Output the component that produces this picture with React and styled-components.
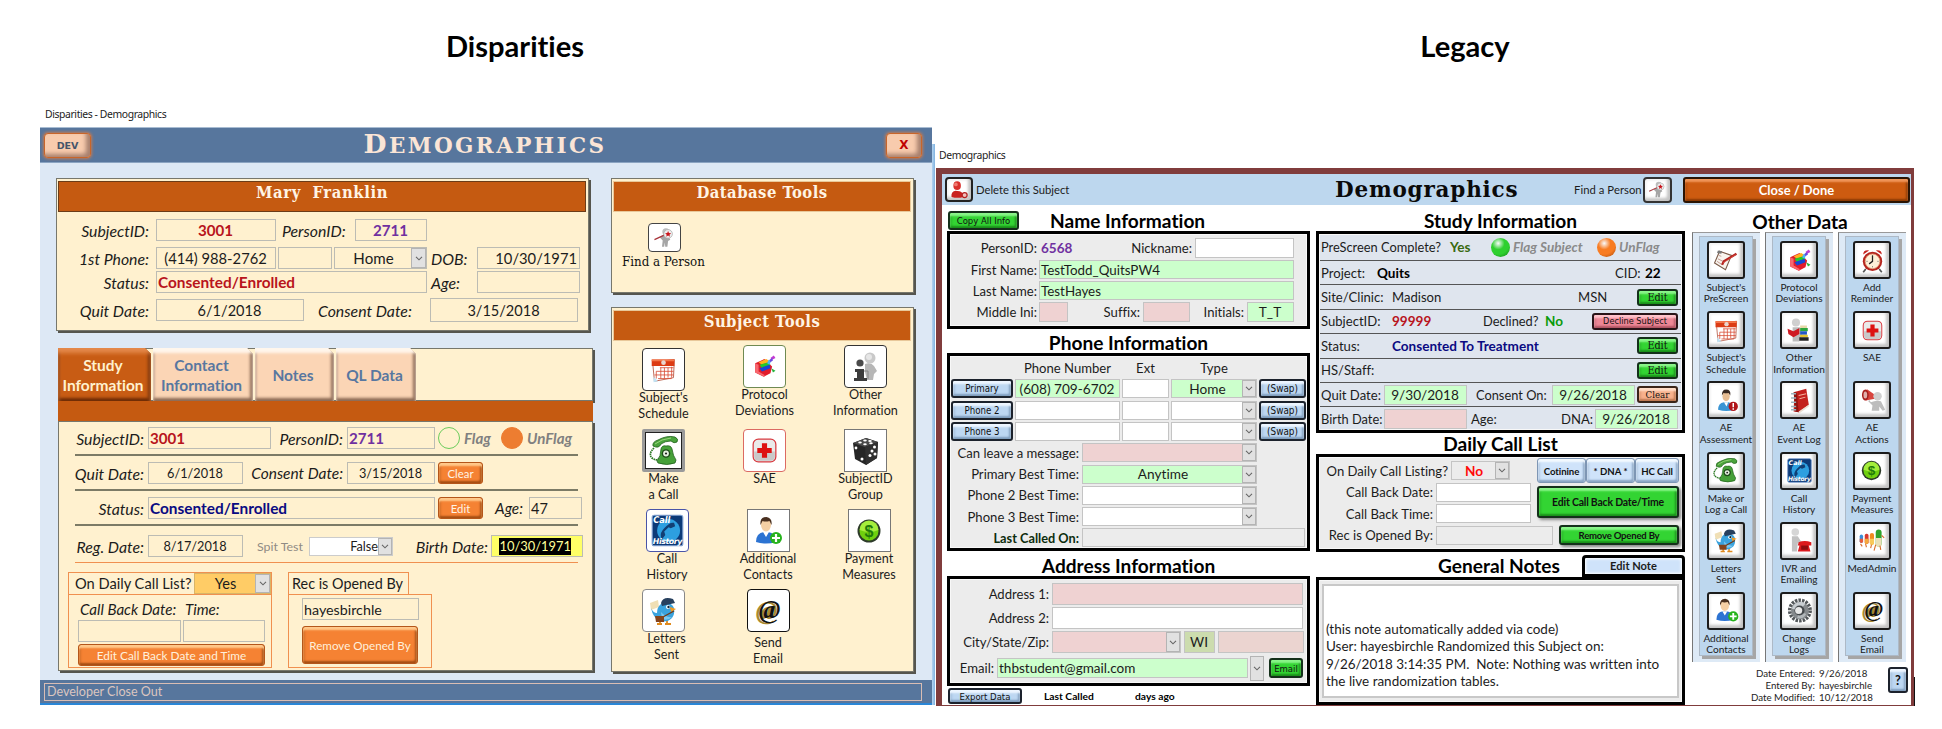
import React from 'react';
import styled, { createGlobalStyle, css } from 'styled-components';

const Global = createGlobalStyle`
  *, *::before, *::after { box-sizing: border-box; }
  body { margin: 0; background: #fff; font-family: Lato, "Open Sans", sans-serif; color: #1c1c1c; font-variant-ligatures: none; }
`;

const FACTOR = 0.91;
const fs = (n) => `${(n * FACTOR).toFixed(2)}px`;

/* ---------- shared pieces ---------- */
const Page = styled.div`
  width: 1942px; height: 729px; display: flex; overflow: hidden; background: #fff;
`;
const Side = styled.section`
  width: ${(p) => p.$w}px; padding-left: ${(p) => p.$pl}px; flex: none;
  display: flex; flex-direction: column; align-items: flex-start;
`;
const Heading = styled.h1`
  margin: 0 0 0 ${(p) => p.$ml}px; width: 200px; height: 94px; line-height: 92px; text-align: center;
  font-size: ${fs(32)}; font-weight: 700; color: #000;
`;
const WindowTitle = styled.div`
  height: 20px; margin: ${(p) => p.$mt}px 0 0 ${(p) => p.$ml}px; font: 400 10.4px/20px "Noto Sans", sans-serif;
  letter-spacing: ${(p) => p.$ls || '-0.3px'}; color: #222; white-space: nowrap;
`;
const Row = styled.div`
  display: flex; align-items: center; flex: none;
  height: ${(p) => p.$h || 22}px; margin-top: ${(p) => p.$mt || 0}px; margin-left: ${(p) => p.$ml || 0}px;
`;
const Label = styled.span`
  flex: none; white-space: nowrap; width: ${(p) => (p.$w ? `${p.$w}px` : 'auto')};
  margin-left: ${(p) => p.$ml || 0}px; text-align: ${(p) => p.$align || 'left'};
  font-size: ${(p) => fs(p.$size || (p.$b ? 14.9 : 14.4))}; font-style: ${(p) => (p.$i ? 'italic' : 'normal')};
  font-weight: ${(p) => (p.$b ? 700 : 400)}; color: ${(p) => p.$c || '#1c1c1c'};
  letter-spacing: ${(p) => p.$ls || 0}px;
  ${(p) => p.$align === 'right' && 'display: flex; justify-content: flex-end;'}
`;
const ItalicLabel = styled(Label)`
  font-size: ${(p) => fs(p.$size || 17.4)}; font-style: italic;
`;
const Field = styled.div`
  flex: none; display: flex; align-items: center; overflow: hidden; white-space: nowrap;
  width: ${(p) => p.$w}px; height: ${(p) => p.$h || 22}px; margin-left: ${(p) => p.$ml || 0}px;
  justify-content: ${(p) => ({ center: 'center', right: 'flex-end' }[p.$align] || 'flex-start')};
  padding: 0 ${(p) => (p.$arrow ? 0 : 2)}px 0 1px;
  background: ${(p) => p.$bg || 'transparent'}; border: 1px solid ${(p) => p.$line || '#bcbcb4'};
  font-size: ${(p) => fs(p.$size || 15)}; font-weight: ${(p) => (p.$b ? 700 : 400)}; color: ${(p) => p.$c || '#1c1c1c'};
`;
const FieldText = styled.span`flex: 1; text-align: ${(p) => p.$align || 'center'};`;
const Arrow = styled.span`
  flex: none; width: ${(p) => p.$w || 14}px; height: 100%; background: #e1e1e1; border: 1px solid #b4b4b4;
  display: flex; align-items: center; justify-content: center;
`;
const Chevron = ({ w }) => (
  <Arrow $w={w}>
    <svg width="8" height="5" viewBox="0 0 8 5"><path d="M1 .8 4 3.8 7 .8" fill="none" stroke="#666" strokeWidth="1.1" /></svg>
  </Arrow>
);
const Select = ({ value, arrow, align, ...rest }) => (
  <Field {...rest} $arrow><FieldText $align={align}>{value}</FieldText><Chevron w={arrow} /></Field>
);

const tones = {
  orange: { bg: '#f58233', hi: '#ffc98b', lo: '#a64f14', line: '#b4561a' },
  rust: { bg: '#cd5b10', hi: '#f0965a', lo: '#8a3a06', line: '#2a1404' },
  green: { bg: '#33d433', hi: '#8af58a', lo: '#1a8f1a', line: '#14301a' },
  pink: { bg: '#ee8796', hi: '#ffc3cb', lo: '#b25464', line: '#2a1418' },
  salmon: { bg: '#f7b08c', hi: '#ffdcc6', lo: '#bd7650', line: '#3a2418' },
  blue: { bg: '#bdd7f2', hi: '#eef6ff', lo: '#7f9dbd', line: '#1c222c' },
  sky: { bg: '#cfe3fa', hi: '#f4faff', lo: '#8aa5c4', line: '#7e96b4' },
};
const Button = styled.button`
  flex: none; padding: 0; white-space: nowrap; display: flex; align-items: center; justify-content: center;
  width: ${(p) => p.$w}px; height: ${(p) => p.$h}px; margin-left: ${(p) => p.$ml || 0}px; margin-top: ${(p) => p.$mt || 0}px;
  font-family: ${(p) => p.$font || 'inherit'}; font-size: ${(p) => fs(p.$size || 12)}; font-weight: ${(p) => (p.$b ? 700 : 400)};
  letter-spacing: ${(p) => p.$ls || 0}px;
  color: ${(p) => p.$c || '#111'}; border-radius: 3px;
  ${(p) => {
    const t = tones[p.$tone];
    return css`
      background: ${t.bg}; border: ${p.$thin ? 1 : 2}px solid ${t.line};
      box-shadow: inset 0 3px 2px ${t.hi}, inset -2px -2px 2px ${t.lo}, inset 2px 0 2px ${t.lo}66${p.$drop ? ', 2px 2px 3px #8a8a8a' : ''};
    `;
  }}
`;

/* ---------- pictures ---------- */
const pics = {
  calendar: <><path d="M4 8 28 5 27 25 6 29z" fill="#fff" stroke="#b9604c" /><path d="M3 5h25v7H3z" fill="#dc3b14" /><path d="M3 5h25v2H3z" fill="#f4774b" /><circle cx="16" cy="8.5" r="2.6" fill="#e8d6cf" /><path d="M12 14h15M8 18h19M6 22h21M10 26h15M8 18v8M13 14v12M17 14v12M21 14v11M25 13v12" stroke="#d84a32" fill="none" strokeWidth=".9" /><path d="m5 24 5 5-5 1z" fill="#bfe2f4" /></>,
  books: <><path d="m5 12 11-5 9 9-2 8-8 4-10-5z" fill="#e21c2b" /><path d="m9 11 9-4 5 3-10 4z" fill="#ffb21e" /><path d="m10 14 11-3 2 3-10 4z" fill="#25c92c" /><path d="m10 18 12-4 1 4-10 4z" fill="#1747d6" /><path d="m5 12 4 2v8l7 4v2L5 23z" fill="#f7686e" /><path d="m19 12 3 2 2-5-3-1z" fill="#4bb6f4" /><path d="m23 6 4-3 2 3-4 2z" fill="#c23bd2" /><path d="m22 8 3-2 1 3-3 2z" fill="#6a4be0" /><path d="m24 18 5 3-3 2z" fill="#25b33a" /></>,
  info: <><circle cx="20" cy="7" r="5.5" fill="#c9c9c9" /><circle cx="19" cy="6" r="3" fill="#e6e6e6" /><path d="M15 13q6-2 9 2l3 5-3 3-1 6h-6l-2-8z" fill="#b7b7b7" /><circle cx="10" cy="12" r="3.6" fill="#4a4a4a" /><path d="M5 18h9v9h3v3H4v-3h3v-6H5z" fill="#3d3d3d" /><path d="M14 20h4v8" stroke="#888" fill="none" /></>,
  phone: <><path d="M6 13q-6 6-2 10 4 3 7 1" fill="none" stroke="#2c7a24" strokeWidth="1.7" strokeDasharray="1.5 .7" /><path d="M5 11q-1-4 5-6 9-5 17-3 4 2 2 5-3 2-6-1-6 0-10 3-2 5-8 2z" fill="#4aa33c" stroke="#1f5f1a" strokeWidth=".8" /><path d="M7 9q6-5 16-6" stroke="#9ad67c" fill="none" /><path d="M13 14q1-4 5-3 5-1 6 3 1 7 4 11l-1 3q-8 3-17 0l-1-2q4-5 4-12z" fill="#45a038" stroke="#1f5f1a" strokeWidth=".8" /><circle cx="18" cy="18.500" r="4.300" fill="#1d4b18" /><circle cx="18" cy="18.500" r="2.900" fill="#e6f0e0" /><circle cx="18" cy="18.500" r="1.100" fill="#222" /></>,
  cross: <><rect x="5" y="5" width="22" height="22" rx="5" fill="#eaeaea" stroke="#d7393f" strokeWidth="1.2" /><path d="M6 17h20v5q0 4-4 4H10q-4 0-4-4z" fill="#c9c9c9" /><path d="M13.500 9h5v4.500H23v5h-4.500V23h-5v-4.500H9v-5h4.500z" fill="#dd1111" /></>,
  dice: <><path d="m16 3 12 4-1 16-11 7L5 24 3 8z" fill="#262626" /><path d="m16 3 12 4-13 5L3 8z" fill="#4a4a4a" /><path d="m15 12 13-5-1 16-11 7z" fill="#303030" /><g fill="#fff"><ellipse cx="10" cy="7.500" rx="1.800" ry="1" /><ellipse cx="15" cy="5.500" rx="1.800" ry="1" /><ellipse cx="20" cy="6" rx="1.800" ry="1" /><ellipse cx="15" cy="9.300" rx="1.800" ry="1" /><ellipse cx="21" cy="8.300" rx="1.800" ry="1" /><circle cx="6" cy="13" r="1.400" /><circle cx="12" cy="24" r="1.500" /><circle cx="24.500" cy="12" r="1.500" /><circle cx="22" cy="16" r="1.500" /><circle cx="20" cy="20.500" r="1.500" /><circle cx="25" cy="19" r="1.500" /></g></>,
  history: <><rect x="2" y="2" width="28" height="28" rx="2" fill="#0c3a78" stroke="#7f9fd0" /><circle cx="17" cy="16" r="10.500" fill="#2d9fe0" /><path d="M10 22q-1-4 3-8 5-6 9-5l1 3-4 2-2-1-4 4 1 3-3 4z" fill="#123f74" /><text x="3" y="9" fontSize="7.500" fontWeight="700" fontStyle="italic" fontFamily="DejaVu Sans" fill="#fff">Call</text><text x="2.500" y="28" fontSize="7.200" fontWeight="700" fontStyle="italic" fontFamily="DejaVu Sans" fill="#fff" textLength="27">History</text></>,
  contact: <><path d="M4 27q0-9 8-10h4q8 1 8 10-10 3-20 0z" fill="#2c73d2" /><path d="m11 17 3 5 3-5z" fill="#fff" /><ellipse cx="14" cy="10" rx="5" ry="6.500" fill="#f5cfa4" /><path d="M8.500 10q-1-8 6-8 6 1 5 8l-2-4q-4 1-7 0z" fill="#4a3020" /><circle cx="24" cy="23" r="6" fill="#27b31d" /><path d="M24 19v8M20 23h8" stroke="#fff" strokeWidth="2.200" /></>,
  alert: <><path d="M6 27q0-8 7-9h5q7 1 7 9-9 3-19 0z" fill="#3a95d4" /><path d="m13 18 3 5 2-5z" fill="#fff" /><ellipse cx="15.500" cy="11" rx="4.300" ry="5.800" fill="#e8bd92" /><path d="M10.500 10q0-7 5-7 6 0 5 7l-2-3q-3 1-6 0z" fill="#3a2a22" /><circle cx="24" cy="23" r="5.500" fill="#b0151a" /><path d="M24 19v5M24 25.300v1.700" stroke="#fff" strokeWidth="1.800" /></>,
  dollar: <><circle cx="16" cy="16" r="11.500" fill="#2d3b2a" /><circle cx="16" cy="16" r="9.500" fill="#6fd00e" /><path d="M6.500 15a9.500 9.500 0 0 1 19 0q-9 4-19 0" fill="#a4ee3c" /><text x="16" y="21.500" textAnchor="middle" fontSize="16" fontWeight="700" fontFamily="Liberation Sans" fill="#1f7a0a">$</text></>,
  bird: <><path d="M9 29h5M17 29h6M12 25v4M19 25v4" stroke="#e08a1e" strokeWidth="1.800" /><path d="m2 8 8-3 1 7-8 3z" fill="#f0dfb5" /><path d="M3 13q2 5 6 5 0-6 4-9 10-3 13 4 1 6-2 10-5 5-12 3-7-3-9-13z" fill="#3aa3de" /><path d="M13 17q5 6 11 5-4 4-10 2z" fill="#7cc9f0" /><path d="M13 8q2-7 12-4l2 4-13 3z" fill="#27405e" /><path d="m22 12 6 2-5 3z" fill="#f29a1f" /><circle cx="20" cy="12" r="2" fill="#fff" /><circle cx="20.500" cy="12" r="1.200" fill="#123" /><path d="m26 16-13 7" stroke="#6d3a1a" strokeWidth="1.400" /><path d="M7 21h9v6H8z" fill="#84441d" /></>,
  at: <><text x="14.500" y="24" textAnchor="middle" fontSize="26" fontWeight="700" fontStyle="italic" fontFamily="Liberation Serif" fill="#a88a30">@</text><text x="17.500" y="23" textAnchor="middle" fontSize="26" fontWeight="700" fontStyle="italic" fontFamily="Liberation Serif" fill="#111">@</text></>,
  find: <><circle cx="18" cy="8" r="5" fill="#bdbdbd" /><path d="M14 13h7l3 6-3 2-1 8h-3l-.5-6-1 6h-3l1-9-4-4z" fill="#a5a5a5" /><path d="M2 19 17 12" stroke="#a8343a" strokeWidth="1.800" /><circle cx="21" cy="11" r="6" fill="#eeeeee" stroke="#aaa" /><path d="m21 7 1.200 2.800 3 .2-2.300 2 .8 3-2.700-1.700-2.700 1.700.8-3-2.300-2 3-.2z" fill="#c9141c" /></>,
  remove: <><ellipse cx="13" cy="9" rx="6" ry="7" fill="#d8302c" /><path d="M4 27q-1-9 6-10l7 1q6 2 6 9-9 3-19 0z" fill="#c9211f" /><ellipse cx="11" cy="7" rx="3" ry="3" fill="#f07a70" /><circle cx="25" cy="24" r="4" fill="#f0c0bc" stroke="#b52222" strokeWidth="2" /></>,
  clip: <><path d="m9 5 14 5-7 17-13-8z" fill="#f8f4ee" stroke="#7a5a48" strokeWidth="1.300" /><path d="m8 10 3 1m-4 3 8 4m-9-1 6 4" stroke="#b98a80" /><path d="m7 4 5 1-1 3-5-1z" fill="#777" /><path d="m12 21 2-4 15-9" fill="none" stroke="#b3221f" strokeWidth="2.600" /><path d="M13 19 28 9" stroke="#e05a4a" strokeWidth=".8" /></>,
  clock: <><path d="M5 9q0-6 7-5zM27 9q0-6-7-5z" fill="#c4221c" /><circle cx="16" cy="17" r="11.500" fill="#b5241d" /><circle cx="16" cy="17" r="8.700" fill="#fdf0d8" stroke="#e2a07a" /><path d="M16 10v7l-4 3" fill="none" stroke="#222" strokeWidth="1.500" /><path d="m8 26-3 4m19-4 3 4" stroke="#555" strokeWidth="2" /><path d="M16 10v1M16 23v1M9 17h1M22 17h1" stroke="#333" /></>,
  reader: <><circle cx="13" cy="6.500" r="4.800" fill="#d0d0d0" /><path d="M9 12h9l2 8-3 9H9z" fill="#bcbcbc" /><path d="m3 14 7 3 7-4v7l-7 4-6-4z" fill="#cf1a22" /><path d="M18 10h8v3h-8z" fill="#e6d8a8" /><path d="M18 13h9v4h-9z" fill="#2aa53c" /><path d="M18 17h8v4h-8z" fill="#2256c8" /><path d="M18 21h9v3h-9z" fill="#e4c32c" /><path d="M17 24h11v4H17z" fill="#222" /></>,
  book: <><path d="m10 6 14-4 3 19-12 9-6-1z" fill="#c3201c" /><path d="m9 6 2 23 4 1-2-23z" fill="#8f1410" /><path d="m15 29 12-8v2l-11 8z" fill="#eadfd2" /><path d="M6 8h6M6 13h6M6 18h6M6 23h6M6 27h6" stroke="#9bb3bd" strokeWidth="1.800" /><path d="m15 10 9-2m-8 6 7-2" stroke="#f3b09c" strokeWidth="1.200" /></>,
  horn: <><path d="m5 4 5-1 10 7-1 4-11 2z" fill="#d8443e" /><ellipse cx="7.500" cy="9.500" rx="4" ry="6.500" fill="#a6211f" /><ellipse cx="7.500" cy="9.500" rx="2.200" ry="4.200" fill="#dfb0ac" /><circle cx="22" cy="11" r="5" fill="#cfcfcf" /><path d="M14 18q7-3 12-1l5 10-3 1-4-5v5h-9l1-6-5-5 1-2z" fill="#bdbdbd" /></>,
  ivr: <><circle cx="11" cy="6" r="4.500" fill="#d6d6d6" /><path d="M7 11h7l5 8-1 2-4-2-1 10H7z" fill="#c2c2c2" /><path d="M15 18q7-3 15 0v4h-3l2 7H14l2-7h-2z" fill="#dc1a1e" /><rect x="18" y="22" width="8" height="5" fill="#8d0d10" /></>,
  pills: <><rect x="2" y="9" width="4" height="10" rx="2" fill="#3b8fd8" /><path d="M2 14h4v3a2 2 0 0 1-4 0z" fill="#e85a3a" /><rect x="8" y="8" width="4.500" height="12" rx="2" fill="#d8382e" /><path d="M8 14h4.500v4a2 2 0 0 1-4.500 0z" fill="#f4a83a" /><rect x="14" y="7" width="5" height="14" rx="2.500" fill="#ee8a1e" /><path d="M14 14h5v5a2.500 2.500 0 0 1-5 0z" fill="#f8c95a" /><rect x="21" y="3" width="7" height="20" rx="3.500" fill="#2fa32c" /><path d="M21 13h7v7a3.500 3.500 0 0 1-7 0z" fill="#e8e0b8" /><path d="m3 20 2 3m4-3 1 4m6-3-1 4m6-4-2 7m7-6 1 5m1-17 3 3" stroke="#d86a28" strokeWidth="1.300" /></>,
  gear: <><circle cx="16.500" cy="16" r="12" fill="none" stroke="#54585b" strokeWidth="4.500" strokeDasharray="2.900 1.290" /><circle cx="16.500" cy="16" r="10.500" fill="#85898c" /><path d="M7 14a10 10 0 0 1 16-6l-7 8z" fill="#c9ced2" /><path d="M24 20a10 10 0 0 1-11 5l3-8z" fill="#b2b7ba" /><circle cx="16" cy="16" r="6" fill="#45494c" /><circle cx="15" cy="16" r="4.200" fill="#e8e8e8" /></>,
};
const Pic = ({ name, size }) => <svg width={size} height={size} viewBox="0 0 32 32">{pics[name]}</svg>;

const IconButton = styled.span`
  flex: none; display: flex; align-items: center; justify-content: center; background: #fff; overflow: hidden;
  width: ${(p) => p.$w}px; height: ${(p) => p.$h || p.$w}px; margin-left: ${(p) => p.$ml || 0}px;
  border: ${(p) => p.$bw || 1}px solid ${(p) => p.$line || '#444'}; border-radius: ${(p) => (p.$r === undefined ? 4 : p.$r)}px;
  box-shadow: ${(p) => (p.$bevel ? 'inset -3px -3px 3px #c4c4c4, inset 2px 2px 2px #f4f4f4' : p.$inner ? 'inset 0 0 0 1px #222' : 'none')};
`;

/* ---------- "Disparities" window ---------- */
const BlueWindow = styled.div`
  width: 896px; height: 578px; display: flex; flex-direction: column; padding-right: 4px;
  background: linear-gradient(90deg, #b4d4f0, #7fb2e0) right 1px bottom / 3px 561px no-repeat;
`;
const BlueHeader = styled.header`
  height: 36px; flex: none; display: flex; align-items: center; background: #57769d; padding: 0 10px 0 4px;
  border-top: 1px solid #a8bcd2; border-bottom: 1px solid #8ba4c2;
`;
const PeachButton = styled.button`
  width: ${(p) => p.$w}px; height: 25px; padding: 0; background: #f8cbad; border: 1px solid #c8652a; border-radius: 4px;
  box-shadow: inset -4px -3px 4px #a8806e, 0 0 3px 1px #c27a54; color: ${(p) => p.$c};
  font: 700 ${(p) => p.$fs}px "DejaVu Sans", sans-serif;
`;
const Copper = styled.h2`
  margin: 0 auto; padding-right: 7px; font: 700 21.500px/34px "DejaVu Serif", serif; letter-spacing: 2.4px; color: #fbe5d6;
  &::first-letter { font-size: 26.500px; }
`;
const BlueBody = styled.div`
  flex: 1; background: #dde8f5; display: flex; align-items: flex-start; padding: 15px 17px 0 16px;
`;
const Stack = styled.div`
  width: ${(p) => p.$w}px; margin-left: ${(p) => p.$ml || 0}px; flex: none; display: flex; flex-direction: column;
`;
const CreamPanel = styled.div`
  width: ${(p) => p.$w}px; height: ${(p) => p.$h}px; margin: ${(p) => p.$mt || 0}px 0 0 ${(p) => p.$ml || 0}px; padding: ${(p) => (p.$pad === undefined ? 2 : p.$pad)}px 2px 0 1px; flex: none;
  background: #fff1cf; border: 1px solid #77776c; box-shadow: 2px 2px 0 #55554e;
  display: flex; flex-direction: column;
`;
const RustBar = styled.div`
  height: 31px; flex: none; background: #c55a11; border: 1px solid ${(p) => p.$line || '#e8c89a'};
  text-align: center; white-space: pre; color: #fff4e4; font: 700 16.500px/21px "DejaVu Serif Condensed", "DejaVu Serif", serif;
  letter-spacing: ${(p) => p.$ls || 0.45}px;
`;
const PlainBar = styled.div`height: 20px; width: 535px; margin-left: 2px; background: #c55a11; flex: none;`;
const TabStrip = styled.div`
  display: flex; width: 535px; height: 53px; margin: 17px 0 0 2px; background: #fff1cf; border: 1px solid #77776c; border-left: 0;
  box-shadow: 2px 2px 0 #55554e; gap: 2px;
`;
const Tab = styled.div`
  width: ${(p) => p.$w}px; height: 53px; margin-top: -1px; display: flex; align-items: center; justify-content: center; text-align: center; flex: none;
  font-size: ${fs(17)}; line-height: 20px; font-weight: 700; padding: 1px 3px 0 0;
  color: ${(p) => (p.$on ? '#fff1cf' : '#5877a0')};
  background: ${(p) => (p.$on ? '#c85c14' : '#fbd5b5')};
  clip-path: polygon(0 0, calc(100% - 6px) 0, 100% 6px, 100% 100%, 0 100%);
  box-shadow: ${(p) => (p.$on
    ? 'inset 0 5px 4px #e58a4c, inset -3px -3px 3px #6e2c06, inset 2px 0 2px #8a3c0c'
    : 'inset 0 5px 3px #fff6ec, inset -3px -3px 3px #8c6a54, inset 2px 0 2px #c9a58c')};
`;
const Divider = styled.div`
  height: ${(p) => p.$h || 2}px; width: 503px; margin: ${(p) => p.$mt}px 0 0 15px; background: ${(p) => p.$c || '#7c7b66'}; flex: none;
`;
const Dot = styled.span`
  flex: none; width: ${(p) => p.$s}px; height: ${(p) => p.$s}px; margin-left: ${(p) => p.$ml || 0}px; border-radius: 50%;
  ${(p) => (p.$ball
    ? css`background: radial-gradient(circle at 38% 28%, #ffffffd0 0, ${p.$c} 35%, ${p.$c} 60%, ${p.$d} 100%);`
    : css`background: ${p.$c}; border: 1px solid ${p.$d};`)}
`;
const OutlineBox = styled.div`
  border: 1px solid #f09050; width: ${(p) => p.$w}px; height: ${(p) => p.$h}px; flex: none;
  display: flex; flex-direction: ${(p) => (p.$row ? 'row' : 'column')}; margin-top: ${(p) => p.$mt || 0}px;
  ${(p) => p.$row && 'align-items: center;'}
`;
const Selected = styled.span`background: #000; color: #ffff9c; line-height: 17px; margin-right: 9px;`;
const ToolGrid = styled.div`
  display: grid; grid-template-columns: repeat(3, 101px); grid-template-rows: 84px 80px 80px 80px; margin-top: 4px;
`;
const Tool = styled.div`
  width: 101px; display: flex; flex-direction: column; align-items: center; text-align: center; white-space: pre;
  padding-left: ${(p) => p.$dx || 0}px; padding-top: ${(p) => p.$dy || 0}px; font-size: ${fs(13.9)}; line-height: 15.700px;
`;
const ToolText = styled.span`
  margin: ${(p) => (p.$gap || 0) - 1}px ${(p) => p.$pull || 0}px 0 0;
`;
const FindText = styled.span`
  margin-left: 9px; height: 20px; font: 400 13.200px/20px "DejaVu Serif Condensed", "DejaVu Serif", serif; color: #111; white-space: nowrap;
`;
const BlueFooter = styled.footer`
  height: 25px; flex: none; background: #57769d; border-bottom: 2px solid #2a86d6; padding: 3px 10px 3px 4px;
`;
const FooterBox = styled.div`
  height: 18px; border: 1px solid #d9bdb4; color: #dcc6c0; padding-left: 2px; font-size: ${fs(13.8)}; line-height: 16px;
`;

const tools = [
  { pic: 'calendar', text: "Subject's\nSchedule", dy: 3, line: '#333' },
  { pic: 'books', text: 'Protocol\nDeviations', line: '#6f8a52' },
  { pic: 'info', text: 'Other\nInformation', line: '#333' },
  { pic: 'phone', text: 'Make\na Call', line: '#9a9a9a', bw: 3, inner: true, r: 2 },
  { pic: 'cross', text: 'SAE', line: '#dc6a62' },
  { pic: 'dice', text: 'SubjectID\nGroup', line: '#777', r: 0 },
  { pic: 'history', text: 'Call\nHistory', line: '#4a55a8', dx: 7 },
  { pic: 'contact', text: 'Additional\nContacts', line: '#777', r: 0, dx: 7 },
  { pic: 'dollar', text: 'Payment\nMeasures', line: '#777', r: 0, dx: 7 },
  { pic: 'bird', text: 'Letters\nSent', line: '#888', pull: -6 },
  { pic: 'at', text: 'Send\nEmail', line: '#111', dx: 7, gap: 4 },
];
const toolPicSize = { history: 35, calendar: 29, books: 27, cross: 33 };

const Disparities = () => (
  <Side $w={936} $pl={40}>
    <Heading $ml={375}>Disparities</Heading>
    <WindowTitle $mt={10} $ml={5} $ls="-0.4px">Disparities - Demographics</WindowTitle>
    <Row $h={3} />
    <BlueWindow>
      <BlueHeader>
        <PeachButton $w={47} $c="#44546a" $fs={9.500}>DEV</PeachButton>
        <Copper>DEMOGRAPHICS</Copper>
        <PeachButton $w={36} $c="#c00000" $fs={12}>X</PeachButton>
      </BlueHeader>
      <BlueBody>
        <Stack $w={537}>
          <CreamPanel $w={533} $h={153}>
            <RustBar $line="#6b3c18" $ls={0.6}>Mary  Franklin</RustBar>
            <Row $mt={7}>
              <ItalicLabel $w={91} $align="right">SubjectID:</ItalicLabel>
              <Field $ml={7} $w={120} $align="center" $b $c="#b8141c" $size={16.6}>3001</Field>
              <ItalicLabel $ml={6} $w={73}>PersonID:</ItalicLabel>
              <Field $w={72} $align="center" $b $c="#7030a0" $size={16.6}>2711</Field>
            </Row>
            <Row $mt={6}>
              <ItalicLabel $w={91} $align="right">1st Phone:</ItalicLabel>
              <Field $ml={7} $w={120} $align="center" $size={16.2}>(414) 988-2762</Field>
              <Field $ml={2} $w={54} />
              <Select $ml={2} $w={93} value="Home" arrow={15} $size={16.6} />
              <ItalicLabel $ml={4} $w={46}>DOB:</ItalicLabel>
              <Field $w={103} $align="right" $size={16.2}>10/30/1971</Field>
            </Row>
            <Row $mt={2}>
              <ItalicLabel $w={91} $align="right">Status:</ItalicLabel>
              <Field $ml={7} $w={271} $b $c="#b8141c" $size={16.9}>Consented/Enrolled</Field>
              <ItalicLabel $ml={4} $w={46}>Age:</ItalicLabel>
              <Field $w={103} />
            </Row>
            <Row $mt={6}>
              <ItalicLabel $w={91} $align="right">Quit Date:</ItalicLabel>
              <Field $ml={7} $w={148} $align="center" $size={16}>6/1/2018</Field>
              <ItalicLabel $ml={14} $w={112}>Consent Date:</ItalicLabel>
              <Field $w={148} $h={24} $align="center" $size={16}>3/15/2018</Field>
            </Row>
          </CreamPanel>
          <TabStrip>
            <Tab $w={93} $on>Study<br />Information</Tab>
            <Tab $w={100}>Contact<br />Information</Tab>
            <Tab $w={79}>Notes</Tab>
            <Tab $w={80}>QL Data</Tab>
          </TabStrip>
          <PlainBar />
          <CreamPanel $w={535} $h={250} $ml={2} $pad={5}>
            <Row>
              <ItalicLabel $w={84} $align="right">SubjectID:</ItalicLabel>
              <Field $ml={4} $w={123} $b $c="#b8141c" $size={16.6}>3001</Field>
              <ItalicLabel $w={72} $align="right">PersonID:</ItalicLabel>
              <Field $ml={4} $w={88} $b $c="#7030a0" $size={16.6}>2711</Field>
              <Dot $ml={3} $s={22} $c="transparent" $d="#6ccc5c" />
              <ItalicLabel $ml={4} $w={37} $b $c="#808080" $size={16.6}>Flag</ItalicLabel>
              <Dot $s={22} $c="#ed7d31" $d="#ed7d31" />
              <ItalicLabel $ml={4} $b $c="#808080" $size={16.6}>UnFlag</ItalicLabel>
            </Row>
            <Divider $mt={5} />
            <Row $mt={6}>
              <ItalicLabel $w={84} $align="right">Quit Date:</ItalicLabel>
              <Field $ml={4} $w={95} $align="center" $size={14}>6/1/2018</Field>
              <ItalicLabel $w={100} $align="right" $size={17}>Consent Date:</ItalicLabel>
              <Field $ml={4} $w={88} $align="center" $size={14}>3/15/2018</Field>
              <Button $ml={3} $w={45} $h={22} $tone="orange" $thin $c="#fff4e6" $size={12.5}>Clear</Button>
            </Row>
            <Divider $mt={5} />
            <Row $mt={6}>
              <ItalicLabel $w={84} $align="right">Status:</ItalicLabel>
              <Field $ml={4} $w={287} $b $c="#0a0a82" $size={16.9}>Consented/Enrolled</Field>
              <Button $ml={3} $w={45} $h={22} $tone="orange" $thin $c="#fff4e6" $size={12.5}>Edit</Button>
              <ItalicLabel $ml={12} $w={34} $size={16.8}>Age:</ItalicLabel>
              <Field $w={53} $size={16}>47</Field>
            </Row>
            <Divider $mt={5} />
            <Row $mt={9}>
              <ItalicLabel $w={84} $align="right">Reg. Date:</ItalicLabel>
              <Field $ml={4} $w={95} $align="center" $size={14}>8/17/2018</Field>
              <Label $ml={14} $w={52} $c="#8f8b84" $size={13.6}>Spit Test</Label>
              <Select $w={84} $h={19} $bg="#fff" $line="#ccc" value="False" align="right" $size={14} />
              <ItalicLabel $w={95} $align="right">Birth Date:</ItalicLabel>
              <Field $ml={3} $w={92} $bg="#ffff66" $align="right" $size={14.2}><Selected>10/30/1971</Selected></Field>
            </Row>
            <Divider $mt={5} $h={1} $c="#f09050" />
            <Row $h={96} $mt={9} $ml={8}>
              <Stack $w={204}>
                <OutlineBox $w={204} $h={23} $row>
                  <Label $ml={6} $w={119} $size={16.1}>On Daily Call List?</Label>
                  <Select $w={77} $h={21} $bg="#ffcc66" $line="#d8b468" value="Yes" arrow={15} $size={16} />
                </OutlineBox>
                <OutlineBox $w={204} $h={74} $mt={-1}>
                  <Row $h={22} $mt={3}>
                    <ItalicLabel $ml={11} $w={105} $size={16.600}>Call Back Date:</ItalicLabel>
                    <ItalicLabel $size={16.600}>Time:</ItalicLabel>
                  </Row>
                  <Row $h={22} $ml={9}><Field $w={103} /><Field $w={82} $ml={2} /></Row>
                  <Button $ml={9} $mt={2} $w={187} $h={22} $tone="orange" $thin $c="#fff0dc" $size={13}>Edit Call Back Date and Time</Button>
                </OutlineBox>
              </Stack>
              <Stack $w={144} $ml={16}>
                <OutlineBox $w={121} $h={23} $row>
                  <Label $ml={3} $size={15.8}>Rec is Opened By</Label>
                </OutlineBox>
                <OutlineBox $w={144} $h={74} $mt={-1}>
                  <Row $h={22} $mt={3} $ml={13}><Field $w={117} $size={15.7}>hayesbirchle</Field></Row>
                  <Button $ml={13} $mt={6} $w={116} $h={38} $tone="orange" $thin $c="#fff0dc" $size={12.800}>Remove Opened By</Button>
                </OutlineBox>
              </Stack>
            </Row>
          </CreamPanel>
        </Stack>
        <Stack $w={303} $ml={18}>
          <CreamPanel $w={303} $h={115}>
            <RustBar>Database Tools</RustBar>
            <Row $h={29} $mt={11} $ml={35}><IconButton $w={33} $h={29}><Pic name="find" size={23} /></IconButton></Row>
            <FindText>Find a Person</FindText>
          </CreamPanel>
          <CreamPanel $w={303} $h={365} $mt={14}>
            <RustBar>Subject Tools</RustBar>
            <ToolGrid>
              {tools.map((t) => (
                <Tool key={t.text} $dx={t.dx} $dy={t.dy}>
                  <IconButton $w={43} $line={t.line} $bw={t.bw} $r={t.r} $inner={t.inner}><Pic name={t.pic} size={toolPicSize[t.pic] || 32} /></IconButton>
                  <ToolText $gap={t.gap} $pull={t.pull}>{t.text}</ToolText>
                </Tool>
              ))}
            </ToolGrid>
          </CreamPanel>
        </Stack>
      </BlueBody>
      <BlueFooter><FooterBox>Developer Close Out</FooterBox></BlueFooter>
    </BlueWindow>
  </Side>
);

/* ---------- "Legacy" window ---------- */
const MaroonWindow = styled.div`
  width: 978px; height: 538px; border: solid #803c3c; border-width: 6px 3px 1px 6px;
  display: flex; flex-direction: column; background: #fff;
`;
const SkyHeader = styled.header`
  height: 31px; flex: none; background: #bdd7ee; display: flex; align-items: center; padding-left: 3px;
`;
const Bookman = styled.h2`
  margin: 0 0 0 ${(p) => p.$ml}px; width: 239px; font: 700 21.500px/30px "DejaVu Serif", serif; letter-spacing: 0.8px; color: #0a0a0a;
`;
const Columns = styled.div`flex: 1; display: flex; align-items: flex-start; padding-left: 5px;`;
const Section = styled.h3`
  margin: ${(p) => p.$mt || 0}px 0 0 ${(p) => p.$ml || 0}px; height: ${(p) => p.$h}px; line-height: ${(p) => p.$h}px; flex: none;
  font-size: ${fs(21)}; font-weight: 700; color: #000; text-align: center; white-space: nowrap;
`;
const BlackPanel = styled.div`
  border: 3px solid #000; background: ${(p) => p.$bg || '#ececec'}; height: ${(p) => p.$h}px; flex: none;
  display: flex; flex-direction: column; box-shadow: inset 0 0 0 1px #f8f8f8;
`;
const Line = styled.div`
  display: flex; align-items: center; height: ${(p) => p.$h || 24.400}px; flex: none; margin: 0 1px; padding-left: 1px;
  border-bottom: ${(p) => (p.$last ? 0 : 1)}px solid #555;
`;
const NoteBox = styled.div`
  margin: 4px 3px; height: 115px; border: 2px solid #c8c8c8; background: #fff; padding: 35px 0 0 2px;
  font-size: ${fs(14.8)}; line-height: 17.400px; white-space: pre;
`;
const NoteHead = styled.div`
  height: 25px; display: flex; justify-content: space-between; align-items: flex-end; padding-left: 122px;
`;
const NoteTab = styled.div`
  width: 103px; height: 22px; border: 3px solid #000; border-radius: 4px 4px 0 0; background: #cfe3fa; text-align: center;
  box-shadow: inset 0 0 3px 1px #fff; font-size: ${fs(12.2)}; font-weight: 700; line-height: 16px;
`;
const Rails = styled.div`display: flex; gap: 5px;`;
const Rail = styled.div`
  width: 68px; height: 430px; background: #deeaf6; border-left: 1px solid #777; border-top: 1px solid #999; padding: 3px 0 0 6px;
`;
const RailInner = styled.div`
  width: 54px; height: 420px; background: #bdd7ee; border: 1px solid #adb9c6; box-shadow: 3px 3px 0 #a6a6a6; padding-top: 4px;
  display: flex; flex-direction: column; align-items: center;
`;
const RailItem = styled.div`
  height: 70.200px; display: flex; flex-direction: column; align-items: center; text-align: center; white-space: pre;
  font-size: ${fs(11.1)}; line-height: 11.400px; flex: none;
`;
const RailText = styled.span`margin-top: 3px;`;
const Meta = styled.div`display: grid; grid-template-columns: 120px 69px; column-gap: 4px; font-size: ${fs(10.7)}; line-height: 12.200px; padding-left: 3px;`;
const MetaKey = styled.span`text-align: right;`;
const FootRow = styled.div`display: flex; align-items: flex-start; padding-top: 5px;`;
const Edge = styled.div`width: 1px; height: 29px; background: #111; align-self: flex-end;`;
const Cluster = styled.div`display: flex; flex-direction: column;`;
const DailyGrid = styled.div`display: flex; align-items: flex-start;`;

const faces = {
  serif: '"DejaVu Serif Condensed", "DejaVu Serif", serif',
  sans: '"DejaVu Sans Condensed", "DejaVu Sans", sans-serif',
};
const GREEN = '#ccffcc';
const PINK = '#efd2d2';
const G = '#c4c4c4';

const NameInfo = () => (
  <BlackPanel $h={98}>
    <Row $h={20} $mt={4}>
      <Label $w={87} $align="right">PersonID:</Label>
      <Label $ml={4} $w={60} $b $c="#7030a0">6568</Label>
      <Label $w={91} $align="right">Nickname:</Label>
      <Field $ml={3} $w={99} $h={20} $bg="#fff" $line={G} />
    </Row>
    <Row $h={19} $mt={2}>
      <Label $w={87} $align="right">First Name:</Label>
      <Field $ml={2} $w={255} $h={19} $bg={GREEN} $line={G} $size={14.700}>TestTodd_QuitsPW4</Field>
    </Row>
    <Row $h={19} $mt={2}>
      <Label $w={87} $align="right">Last Name:</Label>
      <Field $ml={2} $w={255} $h={19} $bg={GREEN} $line={G} $size={14.700}>TestHayes</Field>
    </Row>
    <Row $h={20} $mt={2}>
      <Label $w={87} $align="right">Middle Ini:</Label>
      <Field $ml={2} $w={29} $h={20} $bg={PINK} $line={G} />
      <Label $w={72} $align="right">Suffix:</Label>
      <Field $ml={3} $w={47} $h={20} $bg={PINK} $line={G} />
      <Label $w={54} $align="right">Initials:</Label>
      <Field $ml={3} $w={47} $h={20} $bg={GREEN} $line={G} $align="center">T_T</Field>
    </Row>
  </BlackPanel>
);

const phones = [
  { name: 'Primary', num: '(608) 709-6702', type: 'Home', bg: GREEN },
  { name: 'Phone 2', num: '', type: '', bg: '#fff' },
  { name: 'Phone 3', num: '', type: '', bg: '#fff' },
];
const times = [
  { label: 'Can leave a message:', value: '', bg: PINK },
  { label: 'Primary Best Time:', value: 'Anytime', bg: GREEN },
  { label: 'Phone 2 Best Time:', value: '', bg: '#fff' },
  { label: 'Phone 3 Best Time:', value: '', bg: '#fff' },
];
const PhoneInfo = () => (
  <BlackPanel $h={198}>
    <Row $h={20} $mt={2}>
      <Label $ml={65} $w={105} $align="center">Phone Number</Label>
      <Label $ml={2} $w={47} $align="center">Ext</Label>
      <Label $ml={2} $w={86} $align="center">Type</Label>
    </Row>
    {phones.map((p, i) => (
      <Row key={p.name} $h={19.400} $mt={i ? 2 : 1}>
        <Button $ml={1} $w={62} $h={19} $tone="blue" $font={faces.sans} $size={10.6}>{p.name}</Button>
        <Field $ml={2} $w={105} $h={19} $bg={p.bg} $line={G} $align="center">{p.num}</Field>
        <Field $ml={2} $w={47} $h={19} $bg="#fff" $line={G} />
        <Select $ml={2} $w={86} $h={19} $bg={p.bg} $line={G} value={p.type} />
        <Button $ml={2} $w={47} $h={19} $tone="blue" $font={faces.sans} $size={10.8}>(Swap)</Button>
      </Row>
    ))}
    {times.map((t) => (
      <Row key={t.label} $h={19.300} $mt={2}>
        <Label $w={129} $align="right">{t.label}</Label>
        <Select $ml={3} $w={175} $h={19} $bg={t.bg} $line={G} value={t.value} />
      </Row>
    ))}
    <Row $h={19} $mt={2}>
      <Label $w={129} $align="right" $b $c="#0c2c0c" $size={14}>Last Called On:</Label>
      <Field $ml={3} $w={223} $h={19} $line={G} />
    </Row>
  </BlackPanel>
);

const AddressInfo = () => (
  <BlackPanel $h={110}>
    <Row $mt={4}>
      <Label $w={99} $align="right">Address 1:</Label>
      <Field $ml={3} $w={251} $bg={PINK} $line={G} />
    </Row>
    <Row $mt={2}>
      <Label $w={99} $align="right">Address 2:</Label>
      <Field $ml={3} $w={251} $bg="#fff" $line={G} />
    </Row>
    <Row $mt={2}>
      <Label $w={99} $align="right">City/State/Zip:</Label>
      <Select $ml={3} $w={129} $bg={PINK} $line={G} value="" />
      <Field $ml={3} $w={31} $bg="#ccdcae" $line={G} $align="center">WI</Field>
      <Field $ml={3} $w={86} $bg="#ebd4d0" $line={G} />
    </Row>
    <Row $h={26} $mt={2}>
      <Label $w={44} $align="right">Email:</Label>
      <Field $ml={3} $w={251} $h={20} $bg={GREEN} $line={G} $size={14.9}>thbstudent@gmail.com</Field>
      <Row $h={25} $ml={2}><Chevron w={14} /></Row>
      <Button $ml={5} $w={34} $h={20} $tone="green" $font={faces.sans} $size={10.4}>Email</Button>
    </Row>
  </BlackPanel>
);

const EditButton = ({ ml }) => <Button $ml={ml} $w={41} $h={17} $tone="green" $font={faces.serif} $size={11.8}>Edit</Button>;

const StudyInfo = () => (
  <BlackPanel $h={202} $bg="#dfe5ee">
    <Line $h={27}>
      <Label $w={129} $size={14.1}>PreScreen Complete?</Label>
      <Label $w={41} $b $c="#3a6a10">Yes</Label>
      <Dot $ball $s={19} $c="#2fd02f" $d="#0f7a12" />
      <Label $ml={3} $w={84} $i $b $c="#8a8a8a">Flag Subject</Label>
      <Dot $ball $s={19} $c="#f87c22" $d="#a04408" />
      <Label $ml={3} $i $b $c="#8a8a8a">UnFlag</Label>
    </Line>
    <Line>
      <Label $w={56}>Project:</Label>
      <Label $w={238} $b $c="#000">Quits</Label>
      <Label $w={30}>CID:</Label>
      <Label $b $c="#000">22</Label>
    </Line>
    <Line>
      <Label $w={71}>Site/Clinic:</Label>
      <Label $w={186}>Madison</Label>
      <Label $w={59}>MSN</Label>
      <EditButton />
    </Line>
    <Line>
      <Label $w={71}>SubjectID:</Label>
      <Label $w={91} $b $c="#b8141c">99999</Label>
      <Label $w={62} $size={14.1}>Declined?</Label>
      <Label $w={47} $b $c="#0c9a0c">No</Label>
      <Button $w={86} $h={17} $tone="pink" $font={faces.sans} $size={10}>Decline Subject</Button>
    </Line>
    <Line>
      <Label $w={71}>Status:</Label>
      <Label $w={245} $b $c="#0a0a82">Consented To Treatment</Label>
      <EditButton />
    </Line>
    <Line>
      <Label $w={71}>HS/Staff:</Label>
      <EditButton ml={245} />
    </Line>
    <Line>
      <Label $w={63}>Quit Date:</Label>
      <Field $w={83} $h={20} $bg={GREEN} $line={G} $align="center">9/30/2018</Field>
      <Label $ml={9} $w={76} $size={14.1}>Consent On:</Label>
      <Field $w={83} $h={20} $bg={GREEN} $line={G} $align="center">9/26/2018</Field>
      <Button $ml={2} $w={41} $h={17} $tone="salmon" $font={faces.serif} $size={10.6}>Clear</Button>
    </Line>
    <Line $last $h={23}>
      <Label $w={63} $size={14.1}>Birth Date:</Label>
      <Field $w={83} $h={20} $bg={PINK} $line={G} />
      <Label $ml={4} $w={90}>Age:</Label>
      <Label $w={34}>DNA:</Label>
      <Field $w={83} $h={20} $bg={GREEN} $line={G} $align="center">9/26/2018</Field>
    </Line>
  </BlackPanel>
);

const DailyCall = () => (
  <BlackPanel $h={98}>
    <DailyGrid>
      <Stack $w={218}>
        <Row $h={19} $mt={4}>
          <Label $w={129} $align="right">On Daily Call Listing?</Label>
          <Select $ml={3} $w={59} $h={19} $line={G} value="No" $b $c="#ff0a0a" />
        </Row>
        <Row $h={19} $mt={2.500}>
          <Label $w={114} $align="right">Call Back Date:</Label>
          <Field $ml={3} $w={95} $h={19} $bg="#fff" $line={G} />
        </Row>
        <Row $h={19} $mt={2.500}>
          <Label $w={114} $align="right">Call Back Time:</Label>
          <Field $ml={3} $w={95} $h={19} $bg="#fff" $line={G} />
        </Row>
        <Row $h={19} $mt={2.500}>
          <Label $w={114} $align="right">Rec is Opened By:</Label>
          <Field $ml={3} $w={117} $h={19} $line={G} />
        </Row>
      </Stack>
      <Cluster>
        <Row $h={25} $mt={1}>
          <Button $w={49} $h={25} $tone="sky" $thin $b $size={10.6} $ls={-0.1}>Cotinine</Button>
          <Button $w={49} $h={25} $tone="sky" $thin $b $size={10.6}>* DNA *</Button>
          <Button $w={44} $h={25} $tone="sky" $thin $b $size={10.6} $ls={-0.1}>HC Call</Button>
        </Row>
        <Button $mt={3} $w={142} $h={32} $tone="green" $b $drop $size={11.5} $ls={-0.2}>Edit Call Back Date/Time</Button>
        <Button $mt={7} $ml={22} $w={120} $h={20} $tone="green" $b $drop $size={10.500} $ls={-0.2}>Remove Opened By</Button>
      </Cluster>
    </DailyGrid>
  </BlackPanel>
);

const rails = [
  [['clip', "Subject's\nPreScreen"], ['calendar', "Subject's\nSchedule"], ['alert', 'AE\nAssessment'], ['phone', 'Make or\nLog a Call'], ['bird', 'Letters\nSent'], ['contact', 'Additional\nContacts']],
  [['books', 'Protocol\nDeviations'], ['reader', 'Other\nInformation'], ['book', 'AE\nEvent Log'], ['history', 'Call\nHistory'], ['ivr', 'IVR and\nEmailing'], ['gear', 'Change\nLogs']],
  [['clock', 'Add\nReminder'], ['cross', 'SAE'], ['horn', 'AE\nActions'], ['dollar', 'Payment\nMeasures'], ['pills', 'MedAdmin'], ['at', 'Send\nEmail']],
];
const note = '(this note automatically added via code)\nUser: hayesbirchle Randomized this Subject on:\n9/26/2018 3:14:35 PM.  Note: Nothing was written into\nthe live randomization tables.';

const Legacy = () => (
  <Side $w={1006} $pl={0}>
    <Heading $ml={429}>Legacy</Heading>
    <WindowTitle $mt={51} $ml={3} $ls="-0.4px">Demographics</WindowTitle>
    <Row $h={3} />
    <Row $h={538}>
      <MaroonWindow>
        <SkyHeader>
          <IconButton $w={28} $h={25} $bw={2} $line="#222" $bevel><Pic name="remove" size={20} /></IconButton>
          <Label $ml={3} $w={101} $size={12.400}>Delete this Subject</Label>
          <Bookman $ml={258}>Demographics</Bookman>
          <Label $size={12.400} $w={69} $ls={0.05}>Find a Person</Label>
          <IconButton $w={29} $h={26} $bw={2} $line="#333" $bevel><Pic name="find" size={19} /></IconButton>
          <Button $ml={11} $w={227} $h={26} $tone="rust" $b $c="#fff" $size={14.2}>Close / Done</Button>
        </SkyHeader>
        <Columns>
          <Stack $w={363}>
            <Row $h={26}>
              <Button $ml={1} $mt={5} $w={71} $h={19} $tone="green" $font={faces.sans} $size={10.4}>Copy All Info</Button>
              <Section $h={26} $mt={6} $ml={31}>Name Information</Section>
            </Row>
            <NameInfo />
            <Section $h={20} $mt={4}>Phone Information</Section>
            <PhoneInfo />
            <Section $h={20} $mt={5}>Address Information</Section>
            <AddressInfo />
            <Row $h={18} $mt={1}>
              <Button $ml={1} $w={74} $h={16} $tone="blue" $font={faces.sans} $size={10.400}>Export Data</Button>
              <Label $ml={22} $w={91} $b $c="#000" $size={11.300}>Last Called</Label>
              <Label $b $c="#000" $size={11.300}>days ago</Label>
            </Row>
          </Stack>
          <Stack $w={369} $ml={6}>
            <Section $h={21} $mt={5}>Study Information</Section>
            <StudyInfo />
            <Section $h={21}>Daily Call List</Section>
            <DailyCall />
            <NoteHead>
              <Section $h={22}>General Notes</Section>
              <NoteTab>Edit Note</NoteTab>
            </NoteHead>
            <BlackPanel $h={128}>
              <NoteBox>{note}</NoteBox>
            </BlackPanel>
          </Stack>
          <Stack $w={216} $ml={7}>
            <Section $h={21} $mt={6}>Other Data</Section>
            <Rails>
              {rails.map((items, i) => (
                <Rail key={i}>
                  <RailInner>
                    {items.map(([pic, text]) => (
                      <RailItem key={text}>
                        <IconButton $w={38} $bw={2} $r={3} $line="#1c1c1c" $bevel><Pic name={pic} size={27} /></IconButton>
                        <RailText>{text}</RailText>
                      </RailItem>
                    ))}
                  </RailInner>
                </Rail>
              ))}
            </Rails>
            <FootRow>
              <Meta>
                <MetaKey>Date Entered:</MetaKey><span>9/26/2018</span>
                <MetaKey>Entered By:</MetaKey><span>hayesbirchle</span>
                <MetaKey>Date Modified:</MetaKey><span>10/12/2018</span>
              </Meta>
              <Button $w={20} $h={26} $tone="blue" $b $size={14}>?</Button>
            </FootRow>
          </Stack>
        </Columns>
      </MaroonWindow>
      <Edge />
    </Row>
  </Side>
);

export default function App() {
  return (
    <>
      <Global />
      <Page>
        <Disparities />
        <Legacy />
      </Page>
    </>
  );
}
